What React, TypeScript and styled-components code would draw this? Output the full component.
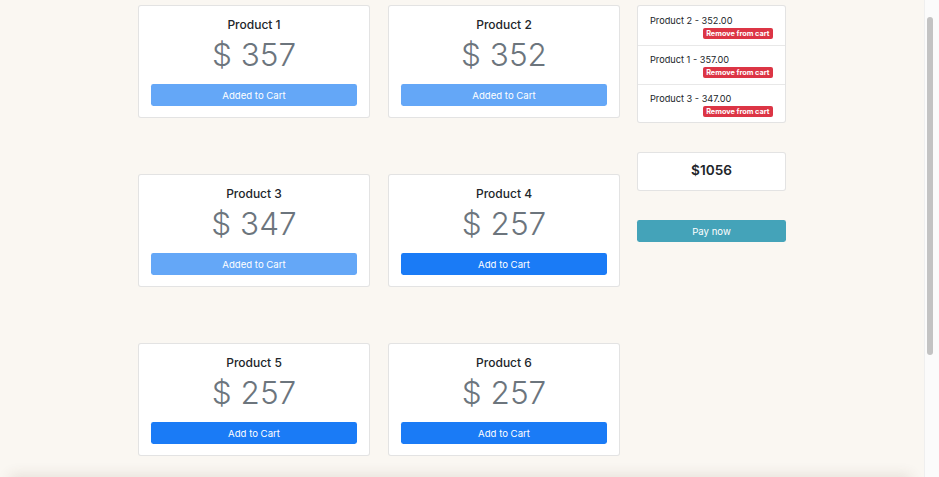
import React from "react";
import styled, { createGlobalStyle } from "styled-components";

const GlobalStyle = createGlobalStyle`
  html {
    background: #faf7f2;
  }
  body {
    margin: 0;
    padding-right: 15px;
    background: #faf7f2;
    font-family: "Inter", "Noto Sans", "Liberation Sans", sans-serif;
    color: #212529;
    -webkit-font-smoothing: antialiased;
  }
`;

const Page = styled.main`
  width: 648px;
  margin: 0 auto;
  padding-top: 5px;
  display: flex;
  align-items: flex-start;
  gap: 17px;
`;

const ProductGrid = styled.section`
  display: grid;
  grid-template-columns: 232px 232px;
  column-gap: 18px;
  row-gap: 56px;
`;

const Card = styled.div`
  box-sizing: border-box;
  height: 113px;
  background: #fff;
  border: 1px solid rgba(0, 0, 0, 0.11);
  border-radius: 3px;
  padding: 12px 12px 11px;
  text-align: center;
`;

const Title = styled.h5`
  margin: 0 0 3px;
  font-size: 12px;
  font-weight: 500;
  line-height: 14px;
  color: #212529;
`;

const Price = styled.div`
  font-size: 31.5px;
  font-weight: 300;
  line-height: 40px;
  color: #6c757d;
  margin-bottom: 9px;
`;

const Button = styled.button<{ $added?: boolean }>`
  display: block;
  width: 100%;
  box-sizing: border-box;
  height: 22px;
  padding: 0 7px;
  border: 0;
  border-radius: 2.4px;
  font-family: inherit;
  font-size: 9.6px;
  font-weight: 400;
  color: #fff;
  background: ${(p) => (p.$added ? "#64a7f7" : "#1a7bf6")};
`;

const CartColumn = styled.aside`
  width: 149px;
  display: flex;
  flex-direction: column;
  gap: 29px;
`;

const CartList = styled.ul`
  list-style: none;
  margin: 0;
  padding: 0;
  background: #fff;
  border: 1px solid rgba(0, 0, 0, 0.11);
  border-radius: 3px;
`;

const CartItem = styled.li`
  display: flex;
  flex-direction: column;
  padding: 7px 12px 6px;
  height: 39px;
  box-sizing: border-box;
  border-top: 1px solid rgba(0, 0, 0, 0.09);
  &:first-child {
    border-top: 0;
    padding-top: 8px;
  }
  &:last-child {
    height: 38px;
  }
`;

const ItemName = styled.span`
  font-size: 9.2px;
  line-height: 13px;
  color: #212529;
`;

const RemoveBadge = styled.span`
  align-self: flex-end;
  margin-top: 1px;
  background: #dc3545;
  color: #fff;
  font-size: 7.3px;
  font-weight: 700;
  line-height: 1;
  padding: 2px 3.5px;
  border-radius: 2px;
`;

const TotalCard = styled.div`
  box-sizing: border-box;
  height: 39px;
  padding-bottom: 4px;
  background: #fff;
  border: 1px solid rgba(0, 0, 0, 0.11);
  border-radius: 3px;
  display: flex;
  align-items: center;
  justify-content: center;
`;

const TotalText = styled.h4`
  margin: 0;
  font-size: 13.6px;
  font-weight: 600;
  color: #212529;
`;

const PayButton = styled.button`
  height: 22px;
  border: 0;
  border-radius: 2.4px;
  background: #44a3b9;
  color: #fff;
  font-family: inherit;
  font-size: 9.6px;
`;

const BottomShade = styled.div`
  position: fixed;
  left: 12px;
  right: 30px;
  bottom: -12px;
  height: 12px;
  box-shadow: 0 0 14px 2px rgba(80, 60, 40, 0.12);
`;

const ScrollTrack = styled.div`
  position: fixed;
  top: 0;
  right: 0;
  bottom: 0;
  width: 15px;
  box-sizing: border-box;
  background: #fbfbfb;
  border-left: 1px solid #efefef;
`;

const ScrollThumb = styled.div`
  position: absolute;
  top: 17px;
  left: 2px;
  width: 6px;
  height: 338px;
  border-radius: 3px;
  background: #c3c3c3;
`;

const products = [
  { name: "Product 1", price: 357, added: true },
  { name: "Product 2", price: 352, added: true },
  { name: "Product 3", price: 347, added: true },
  { name: "Product 4", price: 257, added: false },
  { name: "Product 5", price: 257, added: false },
  { name: "Product 6", price: 257, added: false },
];

const cart = [
  { name: "Product 2", price: 352 },
  { name: "Product 1", price: 357 },
  { name: "Product 3", price: 347 },
];

export default function App() {
  const total = cart.reduce((s, c) => s + c.price, 0);
  return (
    <>
      <GlobalStyle />
      <Page>
        <ProductGrid>
          {products.map((p) => (
            <Card key={p.name}>
              <Title>{p.name}</Title>
              <Price>$ {p.price}</Price>
              <Button $added={p.added}>{p.added ? "Added to Cart" : "Add to Cart"}</Button>
            </Card>
          ))}
        </ProductGrid>
        <CartColumn>
          <CartList>
            {cart.map((c) => (
              <CartItem key={c.name}>
                <ItemName>
                  {c.name} - {c.price.toFixed(2)}
                </ItemName>
                <RemoveBadge>Remove from cart</RemoveBadge>
              </CartItem>
            ))}
          </CartList>
          <TotalCard>
            <TotalText>${total}</TotalText>
          </TotalCard>
          <PayButton>Pay now</PayButton>
        </CartColumn>
      </Page>
      <BottomShade />
      <ScrollTrack>
        <ScrollThumb />
      </ScrollTrack>
    </>
  );
}
